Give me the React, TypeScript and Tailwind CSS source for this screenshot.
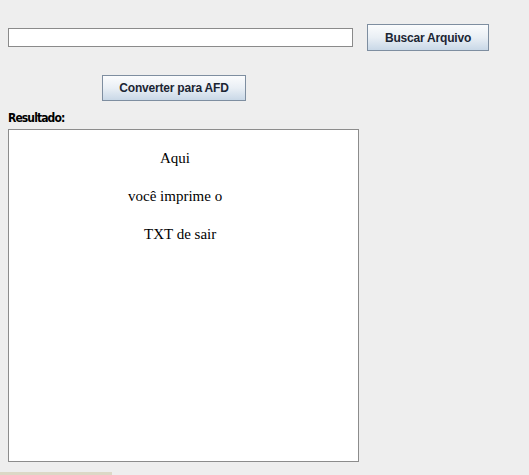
import React from "react";

export default function App() {
  const btn =
    "flex items-center justify-center border border-[#7e8ea0] bg-gradient-to-b from-[#fbfcfd] via-[#e9eff5] to-[#c9d8e7] text-[12px] font-bold text-[#1b2533] font-['Liberation_Sans',Arial,sans-serif] tracking-[-0.2px]";
  return (
    <div className="w-[529px] h-[475px] bg-[#eeeeee] overflow-hidden flex flex-col">
      <div className="flex items-center mt-[24px] pl-[8px]">
        <div className="w-[345px] h-[19px] border border-[#8a8a8a] bg-white" />
        <div className={btn + " ml-[14px] w-[122px] h-[27px]"}>Buscar Arquivo</div>
      </div>
      <div className="mt-[24px] pl-[102px]">
        <div className={btn + " w-[144px] h-[26px]"}>Converter para AFD</div>
      </div>
      <div className="mt-[8px] pl-[8px] h-[20px] text-[12px] font-bold text-black font-['DejaVu_Sans_Condensed','DejaVu_Sans',sans-serif] tracking-[-0.9px] leading-[18px]">
        Resultado:
      </div>
      <div className="ml-[8px] w-[351px] h-[334px] border border-[#8c8c8c] bg-white pt-[19px] font-['Liberation_Serif','Times_New_Roman',serif] text-[15px] text-black leading-[18px]">
        <div className="pl-[151px]">Aqui</div>
        <div className="mt-[20px] pl-[119px]">você imprime o</div>
        <div className="mt-[20px] pl-[135px]">TXT de sair</div>
      </div>
      <div className="mt-[10px] w-[112px] h-[3px] bg-[#dcd8c6]" />
    </div>
  );
}
